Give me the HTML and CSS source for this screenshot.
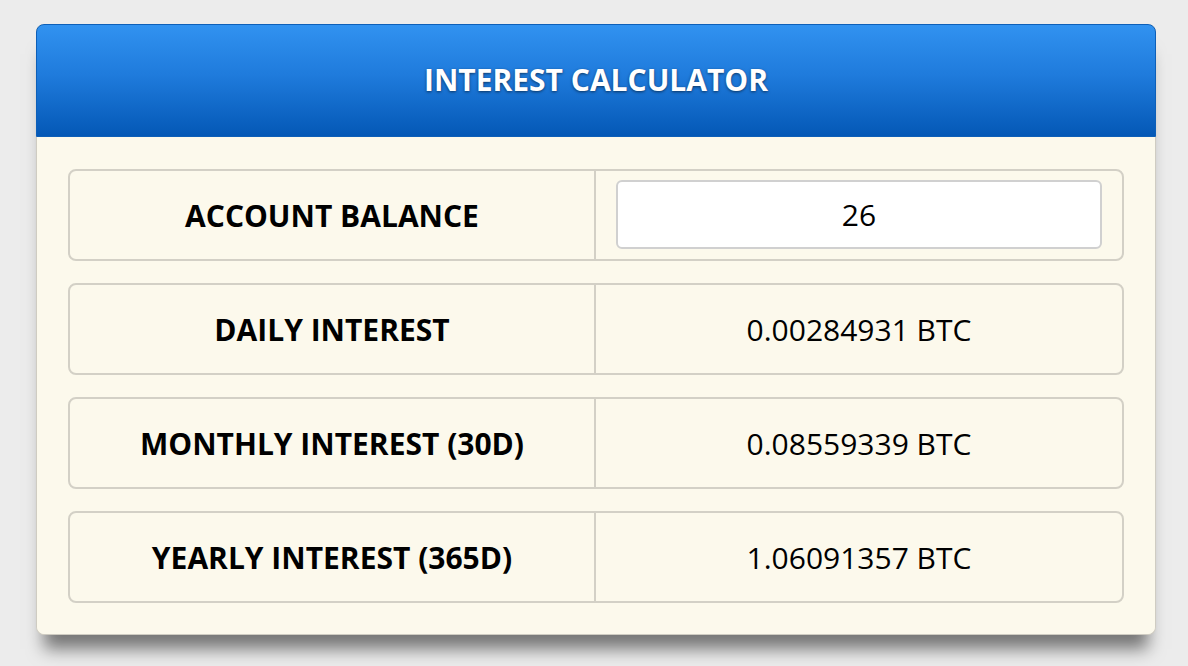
FILE: index.html
```html
<!DOCTYPE html>
<html lang="en">
<head>
  <meta charset="UTF-8">
  <title>Interest Calculator</title>
  <link rel="stylesheet" href="styles.css">
</head>
<body>
  <div class="calculator">
    <div class="calc-header">
      <h2>Interest Calculator</h2>
    </div>

    <div class="calc-body">
      <div class="calc-row">
        <div class="calc-label">Account Balance</div>
        <div class="calc-value">
          <input type="text" id="balance" value="26" />
        </div>
      </div>

      <div class="calc-row">
        <div class="calc-label">Daily Interest</div>
        <div class="calc-value">0.00284931 BTC</div>
      </div>

      <div class="calc-row">
        <div class="calc-label">Monthly Interest (30D)</div>
        <div class="calc-value">0.08559339 BTC</div>
      </div>

      <div class="calc-row">
        <div class="calc-label">Yearly Interest (365D)</div>
        <div class="calc-value">1.06091357 BTC</div>
      </div>
    </div>
  </div>
</body>
</html>
```

FILE: styles.css
```css
* {
  margin: 0;
  padding: 0;
  box-sizing: border-box;
}

html {
  background: #ececec;
}

body {
  font-family: 'Open Sans', 'Noto Sans', sans-serif;
  color: #000;
  padding: 24px 32px 40px 36px;
}

.calculator {
  width: 1120px;
  background: #fcf9ec;
  border: 1px solid #cfccc2;
  border-top: none;
  border-radius: 8px;
  box-shadow: 0 22px 16px -8px rgba(0,0,0,0.5);
}

.calc-header {
  height: 113px;
  display: flex;
  align-items: center;
  justify-content: center;
  background: linear-gradient(to bottom, #3192f0 0%, #1f7bdc 45%, #0458b6 100%);
  border: 1px solid #0d5fb8;
  border-radius: 8px 8px 0 0;
  margin: 0 -1px;
}

.calc-header h2 {
  font-size: 30px;
  font-weight: 700;
  color: #fff;
  text-transform: uppercase;
  text-shadow: 0 1px 3px rgba(0,0,0,0.55);
  margin-bottom: 2px;
}

.calc-body {
  padding: 32px 31px 31px;
  display: flex;
  flex-direction: column;
  gap: 22px;
  background: #fcf9ec;
  border-radius: 0 0 8px 8px;
}

.calc-row {
  display: flex;
  height: 92px;
  border: 2px solid #d3d0c6;
  border-radius: 8px;
}

.calc-label,
.calc-value {
  display: flex;
  align-items: center;
  justify-content: center;
  font-size: 30px;
}

.calc-label {
  width: 526px;
  flex-shrink: 0;
  border-right: 2px solid #d3d0c6;
  font-weight: 700;
  text-transform: uppercase;
}

.calc-value {
  flex: 1;
  padding: 0 20px;
}

#balance {
  width: 100%;
  height: 69px;
  margin-bottom: 1px;
  border: 2px solid #d0d0d0;
  border-radius: 6px;
  background: #fff;
  font-family: inherit;
  font-size: 30px;
  color: #000;
  text-align: center;
  outline: none;
}
```
